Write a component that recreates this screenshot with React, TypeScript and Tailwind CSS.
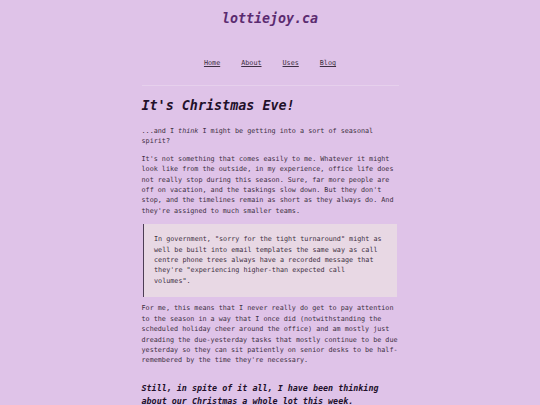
export default function App() {
  return (
    <div className="min-h-screen bg-[#dfc3e8] font-['DejaVu_Sans_Mono',monospace] text-[#3d2f42]">
      <header className="pt-[6px] text-center">
        <a href="#" className="text-[13.3px] font-bold italic leading-[18px] text-[#5b2b70]">lottiejoy.ca</a>
      </header>
      <nav className="mt-[28px] flex justify-center gap-[21px] text-[6.75px] leading-[10px]">
        {['Home', 'About', 'Uses', 'Blog'].map((l) => (
          <a key={l} href="#" className="underline">{l}</a>
        ))}
      </nav>
      <main className="mx-auto w-[257px] text-[6.75px] leading-[10.4px]">
        <hr className="mt-[17px] border-t border-[#e6d0ec]" />
        <h1 className="mt-[12px] text-[13.4px] font-bold italic leading-[16px] text-[#22102a]">It's Christmas Eve!</h1>
        <p className="mt-[12px]">...and I <em>think</em> I might be getting into a sort of seasonal spirit?</p>
        <p className="mt-[7px]">
          It's not something that comes easily to me. Whatever it might look like from the outside, in my experience, office life does not really stop during this season. Sure, far more people are off on vacation, and the taskings slow down. But they don't stop, and the timelines remain as short as they always do. And they're assigned to much smaller teams.
        </p>
        <blockquote className="mt-[8px] mr-[2px] ml-[1.5px] border-l-[1.5px] border-[#4d3d55] bg-[#e8d8e4] pt-[10px] pr-[12px] pb-[11px] pl-[10px]">
          In government, "sorry for the tight turnaround" might as well be built into email templates the same way as call centre phone trees always have a recorded message that they're "experiencing higher-than expected call volumes".
        </blockquote>
        <p className="mt-[6px]">
          For me, this means that I never really do get to pay attention to the season in a way that I once did (notwithstanding the scheduled holiday cheer around the office) and am mostly just dreading the due-yesterday tasks that mostly continue to be due yesterday so they can sit patiently on senior desks to be half-remembered by the time they're necessary.
        </p>
        <h2 className="mt-[16px] text-[8.4px] font-bold italic leading-[13px] text-[#22102a]">
          Still, in spite of it all, I have been thinking about our Christmas a whole lot this week.
        </h2>
        <p className="mt-[7px] pb-[20px]">
          Kathleen and I like to have a quiet and private holiday, just the two of us and the cats, with a big dinner and a long slow morning.
        </p>
      </main>
    </div>
  );
}
